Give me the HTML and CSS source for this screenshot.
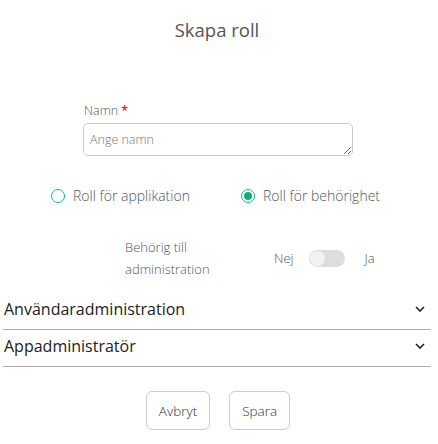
FILE: index.html
```html
<!DOCTYPE html>
<html lang="sv">
<head>
    <meta charset="UTF-8">
    <meta name="viewport" content="width=device-width, initial-scale=1.0">
    <title>Skapa roll</title>
    <link rel="stylesheet" href="styles.css">
</head>
<body>
    <div class="modal">
        <h1 class="title">Skapa roll</h1>

        <div class="field">
            <label for="name" class="field-label">Namn <span class="required">*</span></label>
            <textarea id="name" class="name-input" placeholder="Ange namn"></textarea>
        </div>

        <div class="radio-row">
            <label class="radio">
                <span class="radio-circle"></span>
                Roll för applikation
            </label>
            <label class="radio">
                <span class="radio-circle checked"></span>
                Roll för behörighet
            </label>
        </div>

        <div class="admin-row">
            <div class="admin-label">Behörig till<br>administration</div>
            <span class="switch-text">Nej</span>
            <span class="switch"><span class="knob"></span></span>
            <span class="switch-text">Ja</span>
        </div>

        <div class="accordion">
            <div class="acc-item">
                <span>Användaradministration</span>
                <svg class="chevron" width="10" height="6" viewBox="0 0 10 6"><path d="M1 1l4 4 4-4" fill="none" stroke="#222" stroke-width="1.6"/></svg>
            </div>
            <div class="acc-item">
                <span>Appadministratör</span>
                <svg class="chevron" width="10" height="6" viewBox="0 0 10 6"><path d="M1 1l4 4 4-4" fill="none" stroke="#222" stroke-width="1.6"/></svg>
            </div>
        </div>

        <div class="actions">
            <button class="btn">Avbryt</button>
            <button class="btn">Spara</button>
        </div>
    </div>
</body>
</html>
```

FILE: styles.css
```css
body {
    margin: 0;
    font-family: "Open Sans", "Noto Sans", sans-serif;
    color: #555;
    background: #fff;
}

.modal {
    width: 428px;
    padding: 0 7px 0 3px;
}

.title {
    margin: 0;
    padding-top: 17px;
    text-align: center;
    font-size: 18.5px;
    font-weight: 400;
    color: #555;
    height: 103px;
    box-sizing: border-box;
}

.field {
    margin-left: 80px;
    width: 270px;
}

.field-label {
    display: block;
    font-size: 12.5px;
    font-weight: 300;
    line-height: 16px;
    color: #555;
    margin-bottom: 4px;
    margin-left: 1px;
}

.required {
    color: #e8231f;
    font-weight: 600;
}

.name-input {
    display: block;
    width: 100%;
    height: 33px;
    box-sizing: border-box;
    border: 1px solid #ccc;
    border-radius: 5px;
    padding: 7px 6px;
    font-family: inherit;
    font-size: 12.5px;
    font-weight: 300;
    color: #555;
    resize: vertical;
}

.name-input::placeholder {
    color: #777;
}

.radio-row {
    display: flex;
    margin-top: 32px;
    padding-left: 48px;
    font-size: 14px;
    font-weight: 300;
    line-height: 16px;
    color: #555;
}

.radio {
    display: flex;
    align-items: center;
    gap: 8px;
    width: 195px;
}

.radio-circle {
    width: 14px;
    height: 14px;
    box-sizing: border-box;
    border: 1.5px solid #14b88c;
    border-radius: 50%;
    display: flex;
    align-items: center;
    justify-content: center;
}

.radio-circle.checked::after {
    content: "";
    width: 8px;
    height: 8px;
    border-radius: 50%;
    background: #0fae82;
}

.admin-row {
    display: flex;
    align-items: center;
    margin-top: 32px;
    padding-left: 122px;
    font-size: 13px;
    font-weight: 300;
    color: #555;
}

.admin-label {
    width: 149px;
    line-height: 22px;
}

.switch {
    display: inline-block;
    width: 36px;
    height: 17px;
    border-radius: 9px;
    background: #ddd;
    margin: 0 19px 0 16px;
    position: relative;
}

.knob {
    position: absolute;
    left: 1px;
    top: 1px;
    width: 15px;
    height: 15px;
    border-radius: 50%;
    background: #f2f2f2;
}

.accordion {
    margin-top: 13px;
}

.acc-item {
    display: flex;
    align-items: center;
    justify-content: space-between;
    height: 37px;
    box-sizing: border-box;
    padding: 0 6px 4px 1px;
    border-bottom: 1px solid #aaa;
    font-size: 16px;
    color: #222;
}

.actions {
    display: flex;
    justify-content: center;
    gap: 19px;
    margin-top: 24px;
    padding-left: 2px;
}

.btn {
    height: 39px;
    padding: 0 12px;
    background: #fff;
    border: 1px solid #ccc;
    border-radius: 6px;
    font-family: inherit;
    font-size: 13.5px;
    font-weight: 300;
    color: #333;
}
```
